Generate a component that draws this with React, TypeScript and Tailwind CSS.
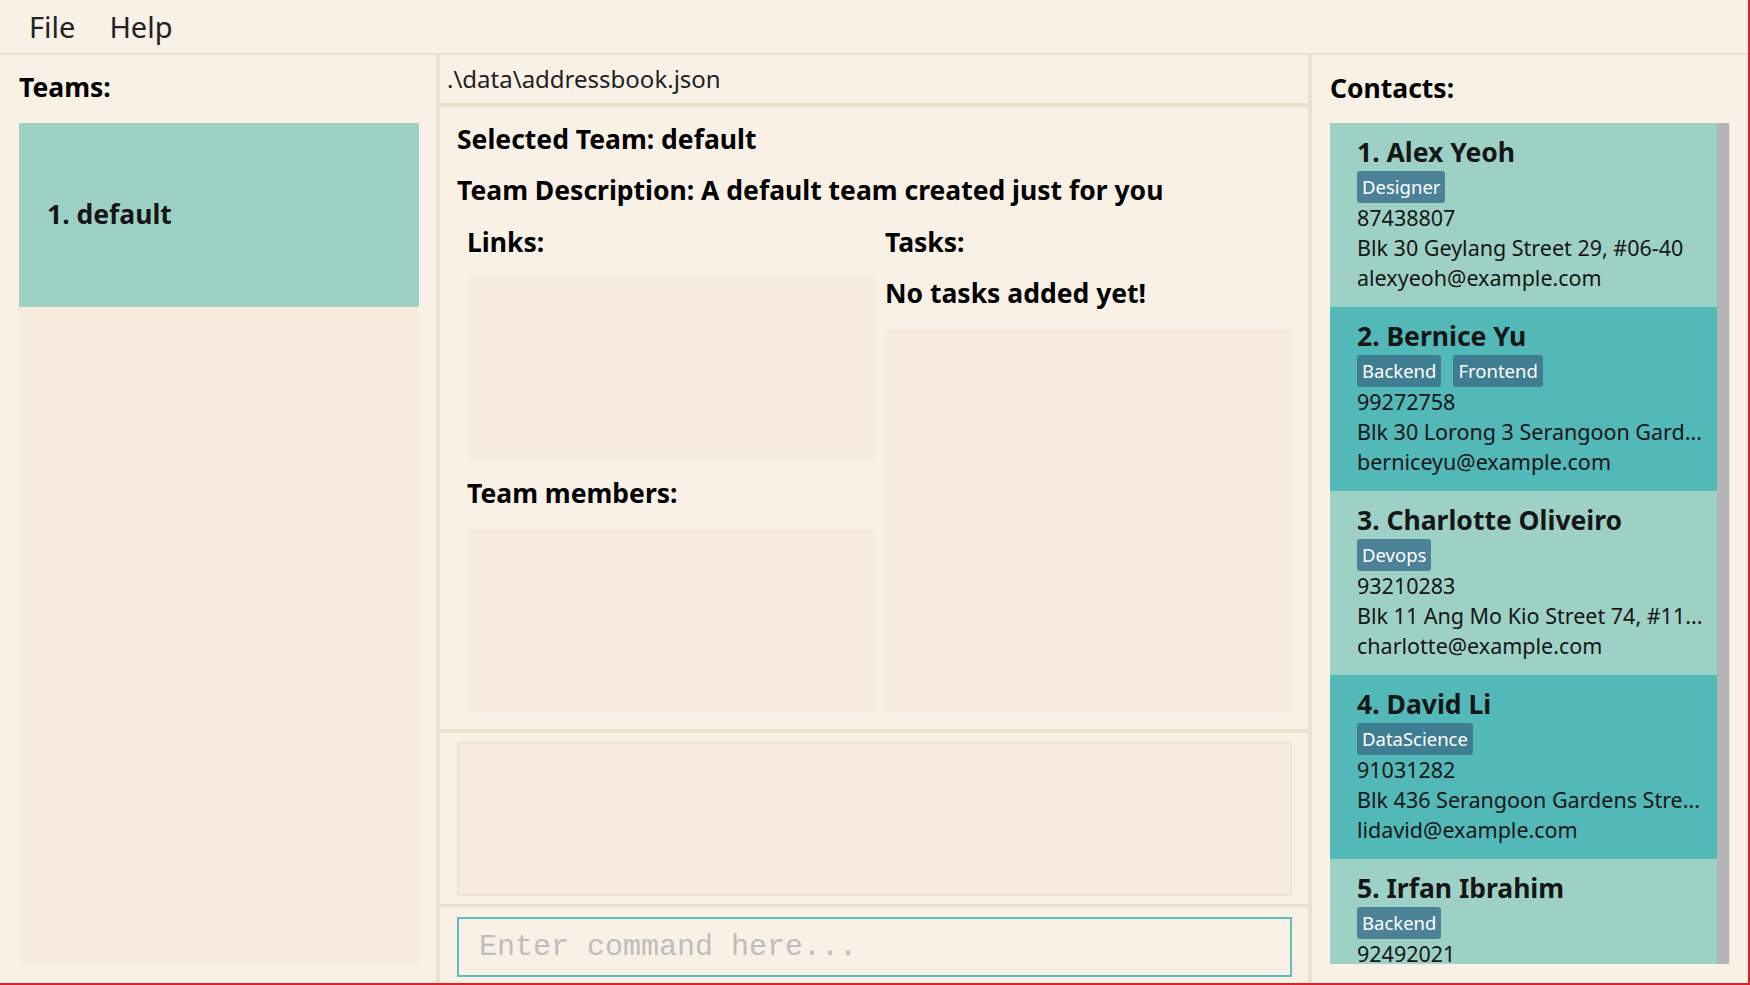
import { useState } from "react";

type Contact = {
  name: string;
  tags: string[];
  phone: string;
  address: string;
  email: string;
};

const contacts: Contact[] = [
  {
    name: "1. Alex Yeoh",
    tags: ["Designer"],
    phone: "87438807",
    address: "Blk 30 Geylang Street 29, #06-40",
    email: "alexyeoh@example.com",
  },
  {
    name: "2. Bernice Yu",
    tags: ["Backend", "Frontend"],
    phone: "99272758",
    address: "Blk 30 Lorong 3 Serangoon Gard...",
    email: "berniceyu@example.com",
  },
  {
    name: "3. Charlotte Oliveiro",
    tags: ["Devops"],
    phone: "93210283",
    address: "Blk 11 Ang Mo Kio Street 74, #11...",
    email: "charlotte@example.com",
  },
  {
    name: "4. David Li",
    tags: ["DataScience"],
    phone: "91031282",
    address: "Blk 436 Serangoon Gardens Stre...",
    email: "lidavid@example.com",
  },
  {
    name: "5. Irfan Ibrahim",
    tags: ["Backend"],
    phone: "92492021",
    address: "Blk 47 Tampines Street 20, #17-35",
    email: "irfan@example.com",
  },
];

function ContactCard({ contact, index }: { contact: Contact; index: number }) {
  const odd = index % 2 === 0;
  return (
    <div
      className={`h-[184px] shrink-0 pl-[27px] pr-[4px] pt-[11px] ${
        odd ? "bg-[#9ed1c5]" : "bg-[#52b8b8]"
      }`}
    >
      <div className="text-[26.5px] font-bold leading-[36px] text-[#161616]">
        {contact.name}
      </div>
      <div className="mt-[1px] flex gap-[12px]">
        {contact.tags.map((tag) => (
          <span
            key={tag}
            className={`h-[32px] rounded-[3px] px-[5px] text-[18.5px] leading-[32px] text-white ${
              odd ? "bg-[#4b8297]" : "bg-[#3f7e92]"
            }`}
          >
            {tag}
          </span>
        ))}
      </div>
      <div className="text-[21.5px] leading-[30px] text-[#161616]">
        <div>{contact.phone}</div>
        <div className="truncate">{contact.address}</div>
        <div>{contact.email}</div>
      </div>
    </div>
  );
}

export default function App() {
  const [command, setCommand] = useState("");

  return (
    <div
      className="flex h-[985px] w-[1750px] flex-col overflow-hidden border-b-2 border-r-2 border-[#e0202a] bg-[#f9f0e6] text-black"
      style={{ fontFamily: '"Noto Sans", "Open Sans", sans-serif' }}
    >
      {/* Menu bar */}
      <div className="flex h-[55px] shrink-0 items-center gap-[34px] border-b-2 border-[#ede1ce] pl-[29px] text-[29px] text-[#222]">
        <span>File</span>
        <span>Help</span>
      </div>

      <div className="flex min-h-0 flex-1">
        {/* Teams */}
        <div className="flex w-[440px] shrink-0 flex-col border-r-4 border-[#ede1ce] pb-[20px] pl-[19px] pr-[17px] pt-[14px]">
          <div className="mb-[18px] text-[26.5px] font-bold leading-[36px]">
            Teams:
          </div>
          <div className="flex-1 bg-[#f7ebde]">
            <div className="flex h-[184px] items-center bg-[#9ed1c5] pl-[28px] text-[26.5px] font-bold text-[#161616]">
              1. default
            </div>
          </div>
        </div>

        {/* Middle */}
        <div className="flex w-[872px] shrink-0 flex-col border-r-4 border-[#ede1ce]">
          <div className="flex h-[52px] shrink-0 items-center border-b-4 border-[#ede1ce] pl-[7px] text-[24px] text-[#222]">
            .\data\addressbook.json
          </div>

          <div className="h-[626px] shrink-0 border-b-4 border-[#ede1ce] pl-[17px] pr-[15px] pt-[14px]">
            <div className="text-[26.5px] font-bold leading-[36px]">
              Selected Team: default
            </div>
            <div className="mt-[15px] text-[26.5px] font-bold leading-[36px]">
              Team Description: A default team created just for you
            </div>
            <div className="mt-[16px] flex gap-[10px] pl-[10px]">
              <div className="flex w-[408px] flex-col">
                <div className="text-[26.5px] font-bold leading-[36px]">Links:</div>
                <div className="mt-[17px] h-[183px] bg-[#f7ebde]" />
                <div className="mt-[15px] text-[26.5px] font-bold leading-[36px]">
                  Team members:
                </div>
                <div className="mt-[18px] h-[183px] bg-[#f7ebde]" />
              </div>
              <div className="flex w-[408px] flex-col">
                <div className="text-[26.5px] font-bold leading-[36px]">Tasks:</div>
                <div className="mt-[15px] text-[26.5px] font-bold leading-[36px]">
                  No tasks added yet!
                </div>
                <div className="mt-[18px] h-[384px] bg-[#f7ebde]" />
              </div>
            </div>
          </div>

          <div className="h-[174px] shrink-0 border-b-[3px] border-[#ede1ce] pl-[17px] pr-[16px] pt-[9px]">
            <div className="h-[154px] border-2 border-[#efe4d3] bg-[#f7ebde]" />
          </div>

          <div className="flex-1 pl-[17px] pr-[16px] pt-[10px]">
            <input
              value={command}
              onChange={(e) => setCommand(e.target.value)}
              placeholder="Enter command here..."
              className="h-[60px] w-full border-2 border-[#5fbdbd] bg-[#f9f0e6] px-[20px] text-[30px] text-[#222] outline-none placeholder:text-[#bdbdbd]"
              style={{ fontFamily: '"Liberation Mono", "Courier New", monospace' }}
            />
          </div>
        </div>

        {/* Contacts */}
        <div className="flex min-w-0 flex-1 flex-col pb-[19px] pl-[18px] pr-[17px] pt-[15px]">
          <div className="mb-[17px] text-[26.5px] font-bold leading-[36px]">
            Contacts:
          </div>
          <div className="flex min-h-0 flex-1">
            <div className="flex w-[387px] flex-col overflow-hidden">
              {contacts.map((c, i) => (
                <ContactCard key={c.name} contact={c} index={i} />
              ))}
            </div>
            <div className="w-[12px] bg-[#b4b4b4]" />
            <div className="w-[1px] bg-[#e4e4e4]" />
          </div>
        </div>
      </div>
    </div>
  );
}
